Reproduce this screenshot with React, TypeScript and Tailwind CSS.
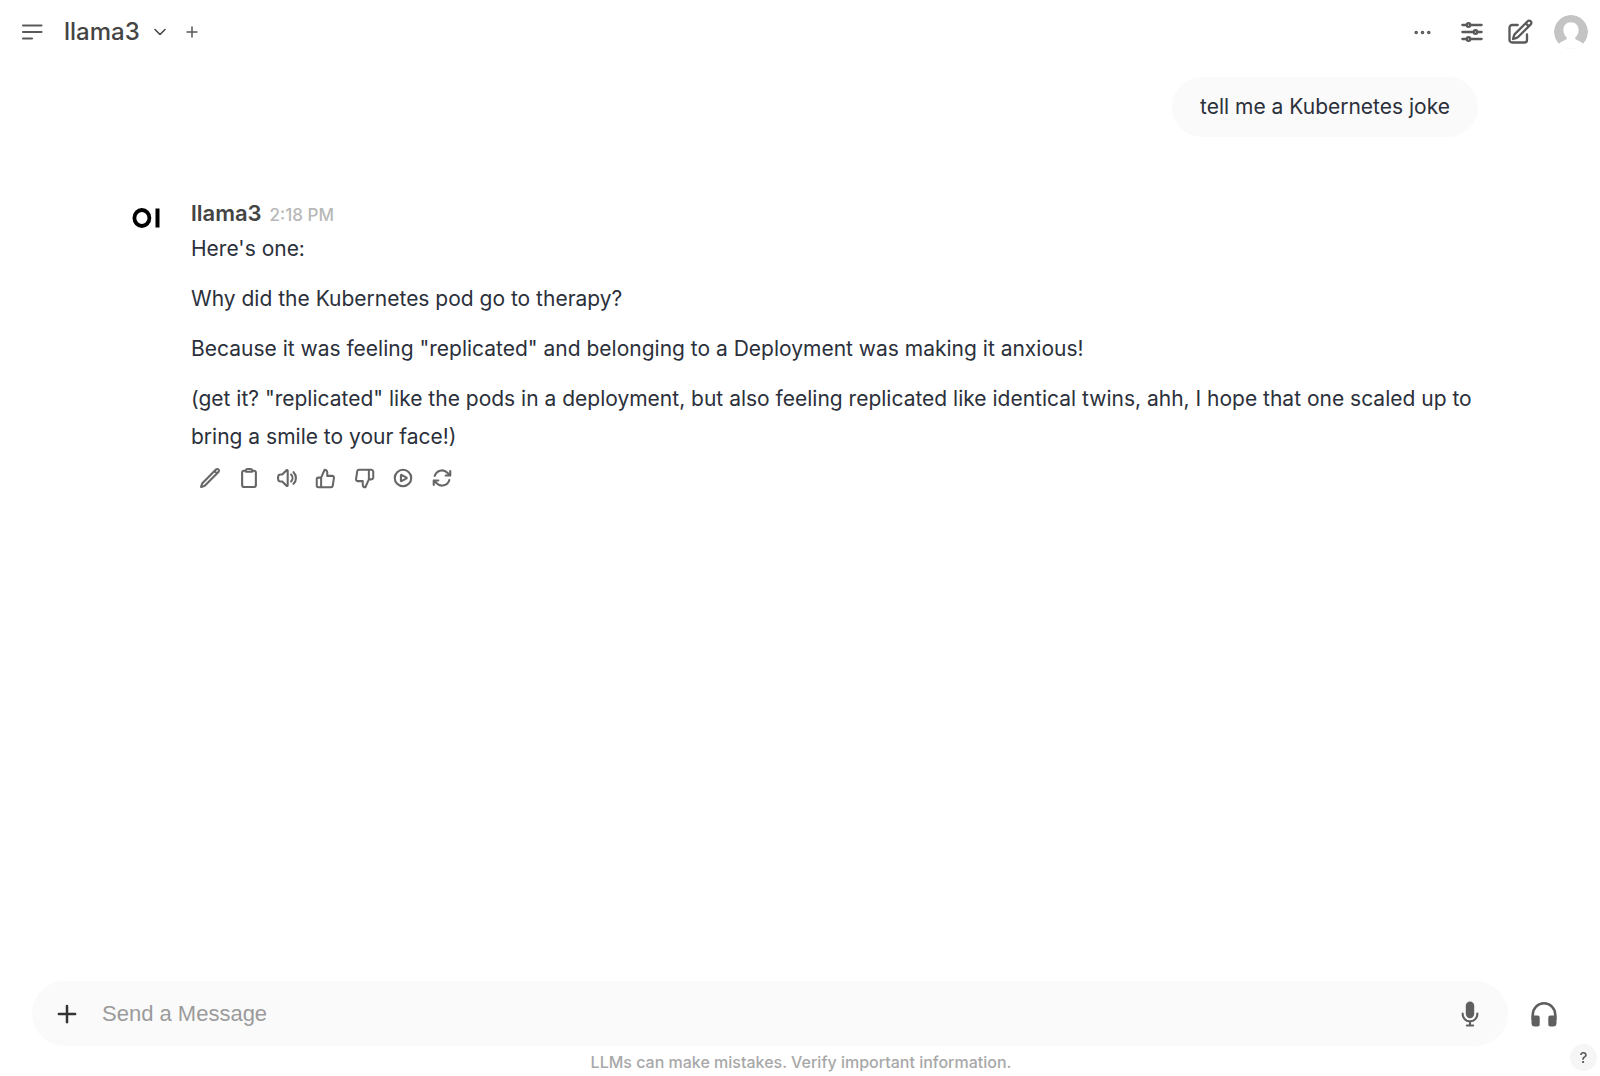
import type { ReactNode } from 'react'
import { FiThumbsDown, FiThumbsUp } from 'react-icons/fi'
import {
  HiOutlineAdjustmentsHorizontal,
  HiOutlineArrowPath,
  HiOutlineChevronDown,
  HiOutlineClipboard,
  HiOutlineEllipsisHorizontal,
  HiOutlinePencil,
  HiOutlinePencilSquare,
  HiOutlinePlayCircle,
  HiOutlinePlus,
  HiOutlineSpeakerWave,
} from 'react-icons/hi2'

const paragraphs = [
  "Here's one:",
  'Why did the Kubernetes pod go to therapy?',
  'Because it was feeling "replicated" and belonging to a Deployment was making it anxious!',
  '(get it? "replicated" like the pods in a deployment, but also feeling replicated like identical twins, ahh, I hope that one scaled up to bring a smile to your face!)',
]

const actions = [
  { label: 'Edit', icon: <HiOutlinePencil size={22} strokeWidth={2.3} /> },
  { label: 'Copy', icon: <HiOutlineClipboard size={22} strokeWidth={2.3} /> },
  { label: 'Read Aloud', icon: <HiOutlineSpeakerWave size={22} strokeWidth={2.3} /> },
  { label: 'Good Response', icon: <FiThumbsUp size={21} strokeWidth={2.3} /> },
  { label: 'Bad Response', icon: <FiThumbsDown size={21} strokeWidth={2.3} /> },
  { label: 'Continue Response', icon: <HiOutlinePlayCircle size={22} strokeWidth={2.3} /> },
  { label: 'Regenerate', icon: <HiOutlineArrowPath size={22} strokeWidth={2.3} /> },
]

function IconButton({ label, children }: { label: string; children: ReactNode }) {
  return (
    <button type="button" aria-label={label} className="flex min-w-6 shrink-0 items-center justify-center">
      {children}
    </button>
  )
}

function MenuIcon() {
  return (
    <svg className="h-6 w-6" viewBox="0 0 24 24" fill="none" stroke="currentColor" strokeWidth="2.1" strokeLinecap="round">
      <path d="M3 5.500h18.500M3 12h18.500M3 18.500h9" />
    </svg>
  )
}

function Avatar() {
  return (
    <svg className="h-[34px] w-[34px] rounded-full" viewBox="0 0 34 34">
      <circle cx="17" cy="17" r="17" fill="#c4c4c4" />
      <path
        d="M17 7.2c-4.600 0-7.600 3.300-7.600 7.600 0 3.400 1.400 6.200 3.400 7.800.4 1.500-.7 2.200-2.600 2.900-2.600.9-4.700 2.200-6.200 4.500V34h26v-4c-1.500-2.300-3.600-3.600-6.200-4.500-1.900-.7-3-1.400-2.600-2.900 2-1.600 3.400-4.400 3.400-7.800 0-4.300-3-7.600-7.600-7.600Z"
        fill="#fff"
      />
    </svg>
  )
}

function Logo() {
  return (
    <svg className="h-12 w-12" viewBox="0 0 48 48" role="img" aria-label="Open WebUI">
      <ellipse cx="19.900" cy="24" rx="7.500" ry="8" fill="none" stroke="#000" strokeWidth="3.800" />
      <rect x="33.500" y="14.500" width="4" height="19" fill="#000" />
    </svg>
  )
}

function MicIcon() {
  return (
    <svg className="h-7 w-7" viewBox="0 0 20 20" fill="currentColor">
      <path d="M7 4a3 3 0 0 1 6 0v6a3 3 0 1 1-6 0V4Z" />
      <path d="M5.5 9.643a.75.75 0 0 0-1.500 0V10c0 3.060 2.290 5.585 5.250 5.954V17.500h-1.500a.75.75 0 0 0 0 1.500h4.500a.75.75 0 0 0 0-1.500h-1.500v-1.546A6.001 6.001 0 0 0 16 10v-.357a.75.75 0 0 0-1.500 0V10a4.500 4.500 0 0 1-9 0v-.357Z" />
    </svg>
  )
}

function HeadphonesIcon() {
  return (
    <svg className="h-7 w-7" viewBox="0 0 28 28" fill="currentColor">
      <path
        d="M2.800 20v-5.500a11.200 11.200 0 0 1 22.400 0V20"
        fill="none"
        stroke="currentColor"
        strokeWidth="2.600"
      />
      <path d="M1.500 15.500h6.200a2 2 0 0 1 2 2v7a2 2 0 0 1-2 2H5a3.500 3.500 0 0 1-3.500-3.500ZM26.500 15.500h-6.200a2 2 0 0 0-2 2v7a2 2 0 0 0 2 2H23a3.500 3.500 0 0 0 3.500-3.500Z" />
    </svg>
  )
}

export default function App() {
  return (
    <div className="flex min-h-screen flex-col bg-white font-['Inter',sans-serif] text-[#2b303b]">
      <header className="flex h-16 items-center justify-between pr-3 pl-5 text-[#5a5a5a]">
        <div className="flex items-center">
          <IconButton label="Toggle Sidebar">
            <MenuIcon />
          </IconButton>
          <button
            type="button"
            aria-label="Select a model"
            className="ml-5 flex items-center gap-3 text-2xl font-medium text-[#444]"
          >
            llama3
            <HiOutlineChevronDown size={16} strokeWidth={2.3} />
          </button>
          <div className="ml-3 flex">
            <IconButton label="Add Model">
              <HiOutlinePlus size={16} strokeWidth={2.3} />
            </IconButton>
          </div>
        </div>

        <div className="flex items-center gap-5">
          <button type="button" aria-label="More" className="flex w-8 items-center justify-center">
            <HiOutlineEllipsisHorizontal size={25} strokeWidth={2} />
          </button>
          <IconButton label="Controls">
            <HiOutlineAdjustmentsHorizontal size={28} strokeWidth={2} />
          </IconButton>
          <IconButton label="New Chat">
            <HiOutlinePencilSquare size={28} strokeWidth={2} />
          </IconButton>
          <IconButton label="User menu">
            <Avatar />
          </IconButton>
        </div>
      </header>

      <main className="mx-auto w-full max-w-[1356px] flex-1 pt-[13px]">
        <div className="flex justify-end">
          <p className="rounded-full bg-[#fafafa] px-7 py-[11px] text-[21px] leading-[38px]">
            tell me a Kubernetes joke
          </p>
        </div>

        <article className="mt-[57px] flex gap-[21px]">
          <div className="shrink-0">
            <Logo />
          </div>
          <div className="min-w-0 flex-1">
            <div className="mt-1 flex items-baseline gap-2 leading-[30px]">
              <h2 className="text-[22px] font-semibold text-[#444]">llama3</h2>
              <time className="text-[17px] font-medium text-[#b8b8b8]">2:18 PM</time>
            </div>
            <div className="space-y-3 text-[21px] leading-[38px]">
              {paragraphs.map((text) => (
                <p key={text}>{text}</p>
              ))}
            </div>
            <div className="mt-1 flex w-[270px] justify-between text-[#666]">
              {actions.map((action) => (
                <button
                  key={action.label}
                  type="button"
                  aria-label={action.label}
                  className="flex h-9 w-[38px] items-center justify-center"
                >
                  {action.icon}
                </button>
              ))}
            </div>
          </div>
        </article>
      </main>

      <footer className="pl-8">
        <form className="flex items-center pr-[42px]" onSubmit={(e) => e.preventDefault()}>
          <div className="flex h-[65px] flex-1 items-center rounded-full bg-[#fafafa] pr-6 pl-[22px]">
            <button type="button" aria-label="More options" className="text-[#333]">
              <HiOutlinePlus size={26} strokeWidth={2.3} />
            </button>
            <input
              type="text"
              aria-label="Send a Message"
              placeholder="Send a Message"
              className="ml-[22px] h-10 min-w-0 flex-1 bg-transparent font-['Liberation_Sans',sans-serif] text-[22px] leading-8 outline-none placeholder:text-[#9b9b9b]"
            />
            <button type="button" aria-label="Record voice" className="text-[#5f5f5f]">
              <MicIcon />
            </button>
          </div>
          <button type="button" aria-label="Call" className="ml-[22px] text-[#5f5f5f]">
            <HeadphonesIcon />
          </button>
        </form>
        <div className="pt-1 pr-[30px] pb-[2px]">
          <p className="text-center text-[16px] leading-6 font-medium text-[#a8a8a8]">
            LLMs can make mistakes. Verify important information.
          </p>
        </div>
      </footer>

      <button
        type="button"
        aria-label="Help"
        className="fixed right-[3px] bottom-[5px] h-[27px] w-[27px] rounded-full bg-[#f6f6f6] text-[15px] leading-[27px] font-medium text-[#555]"
      >
        ?
      </button>
    </div>
  )
}
